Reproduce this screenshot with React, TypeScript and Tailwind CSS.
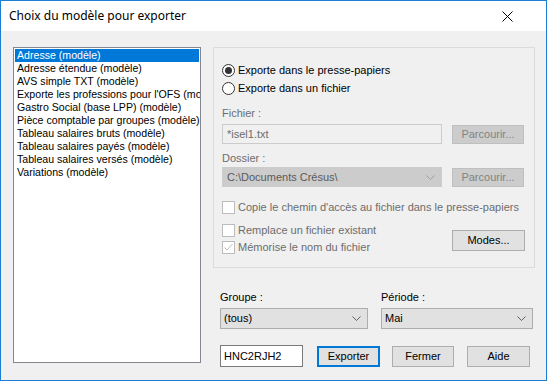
import React from 'react';

const items = [
  'Adresse (modèle)',
  'Adresse étendue (modèle)',
  'AVS simple TXT (modèle)',
  "Exporte les professions pour l'OFS (modèle)",
  'Gastro Social (base LPP) (modèle)',
  'Pièce comptable par groupes (modèle)',
  'Tableau salaires bruts (modèle)',
  'Tableau salaires payés (modèle)',
  'Tableau salaires versés (modèle)',
  'Variations (modèle)',
];

const Chevron = ({ color }: { color: string }) => (
  <svg width="9" height="5" viewBox="0 0 9 5" className="shrink-0">
    <path d="M0.5 0.5 L4.5 4.5 L8.5 0.5" fill="none" stroke={color} strokeWidth="1" />
  </svg>
);

const Radio = ({ checked, label }: { checked?: boolean; label: string }) => (
  <div className="flex items-center h-[18px]">
    <div className="w-[13px] h-[13px] rounded-full border border-[#333333] bg-white flex items-center justify-center">
      {checked && <div className="w-[7px] h-[7px] rounded-full bg-[#333333]" />}
    </div>
    <span className="ml-[3px] text-black">{label}</span>
  </div>
);

const Check = ({ checked, label }: { checked?: boolean; label: string }) => (
  <div className="flex items-center h-[14px]">
    <div className="w-[13px] h-[13px] border border-[#bcbcbc] bg-white flex items-center justify-center">
      {checked && (
        <svg width="11" height="11" viewBox="0 0 11 11">
          <path d="M1.5 5.5 L4 8 L9.5 2" fill="none" stroke="#bcbcbc" strokeWidth="1" />
        </svg>
      )}
    </div>
    <span className="ml-[3px] text-[#6d6d6d]">{label}</span>
  </div>
);

export default function App() {
  return (
    <div
      className="w-[547px] h-[381px] border border-[#1a7fd4] bg-[#f0f0f0] flex flex-col text-[11px] overflow-hidden"
      style={{ fontFamily: '"Liberation Sans", Arial, sans-serif' }}
    >
      {/* Title bar */}
      <div className="h-[30px] bg-white flex items-center justify-between pl-[8px] pr-[33px] shrink-0">
        <span className="text-[12px] text-black" style={{ fontFamily: '"Noto Sans", sans-serif' }}>
          Choix du modèle pour exporter
        </span>
        <svg width="11" height="11" viewBox="0 0 11 11">
          <path d="M0.5 0.5 L10.5 10.5 M10.5 0.5 L0.5 10.5" stroke="#000" strokeWidth="1" />
        </svg>
      </div>

      <div className="flex pt-[16px] pl-[12px]">
        {/* List */}
        <div className="w-[188px] h-[316px] border border-[#828790] bg-white p-[1px] overflow-hidden text-[10.6px]">
          {items.map((it, i) => (
            <div
              key={it}
              className={`h-[13px] leading-[13px] pl-[2px] whitespace-nowrap ${
                i === 0 ? 'bg-[#0078d7] text-white' : 'text-black'
              }`}
            >
              {it}
            </div>
          ))}
        </div>

        {/* Right side */}
        <div className="ml-[12px] flex flex-col">
          <div className="w-[322px] h-[221px] border border-[#dcdcdc] pl-[8px] pt-[13px] flex flex-col">
            <Radio checked label="Exporte dans le presse-papiers" />
            <Radio label="Exporte dans un fichier" />

            <div className="mt-[9px] text-[#6d6d6d] h-[14px] leading-[14px]">Fichier :</div>
            <div className="mt-[4px] flex items-center">
              <div className="w-[220px] h-[20px] border border-[#cccccc] bg-[#f0f0f0] pl-[4px] flex items-center text-[#6d6d6d]">
                *isel1.txt
              </div>
              <div className="ml-[10px] w-[72px] h-[19px] border border-[#bfbfbf] bg-[#cccccc] flex items-center justify-center text-[#838383]">
                Parcourir...
              </div>
            </div>

            <div className="mt-[7px] text-[#6d6d6d] h-[14px] leading-[14px]">Dossier :</div>
            <div className="mt-[2px] flex items-center">
              <div className="w-[220px] h-[20px] border border-[#cccccc] bg-[#cccccc] pl-[4px] pr-[6px] flex items-center justify-between text-[#5a5a5a]">
                <span>C:\Documents Crésus\</span>
                <Chevron color="#a0a0a0" />
              </div>
              <div className="ml-[10px] w-[72px] h-[19px] border border-[#bfbfbf] bg-[#cccccc] flex items-center justify-center text-[#838383]">
                Parcourir...
              </div>
            </div>

            <div className="mt-[13px]">
              <Check label="Copie le chemin d'accès au fichier dans le presse-papiers" />
            </div>
            <div className="flex items-start">
              <div className="flex flex-col">
                <div className="mt-[9px]">
                  <Check label="Remplace un fichier existant" />
                </div>
                <div className="mt-[3px]">
                  <Check checked label="Mémorise le nom du fichier" />
                </div>
              </div>
              <div className="ml-auto mr-[9px] mt-[16px] w-[73px] h-[21px] border border-[#adadad] bg-[#e1e1e1] flex items-center justify-center text-black">
                Modes...
              </div>
            </div>
          </div>

          <div className="flex mt-[22px]">
            <div className="flex flex-col w-[148px] ml-[7px]">
              <div className="h-[14px] leading-[14px] text-black">Groupe :</div>
              <div className="mt-[4px] h-[21px] border border-[#adadad] bg-[#e1e1e1] pl-[3px] pr-[6px] flex items-center justify-between text-black">
                <span>(tous)</span>
                <Chevron color="#606060" />
              </div>
            </div>
            <div className="flex flex-col w-[152px] ml-[13px]">
              <div className="h-[14px] leading-[14px] text-black">Période :</div>
              <div className="mt-[4px] h-[21px] border border-[#adadad] bg-[#e1e1e1] pl-[3px] pr-[6px] flex items-center justify-between text-black">
                <span>Mai</span>
                <Chevron color="#606060" />
              </div>
            </div>
          </div>

          <div className="flex items-center mt-[16px] ml-[7px]">
            <div className="w-[83px] h-[22px] border border-[#7a7a7a] bg-white pl-[3px] flex items-center text-black">
              HNC2RJH2
            </div>
            <div className="ml-[14px] w-[63px] h-[21px] border-2 border-[#0078d7] bg-[#e1e1e1] flex items-center justify-center text-black">
              Exporter
            </div>
            <div className="ml-[12px] w-[62px] h-[21px] border border-[#adadad] bg-[#e1e1e1] flex items-center justify-center text-black">
              Fermer
            </div>
            <div className="ml-[13px] w-[63px] h-[21px] border border-[#adadad] bg-[#e1e1e1] flex items-center justify-center text-black">
              Aide
            </div>
          </div>
        </div>
      </div>
    </div>
  );
}
